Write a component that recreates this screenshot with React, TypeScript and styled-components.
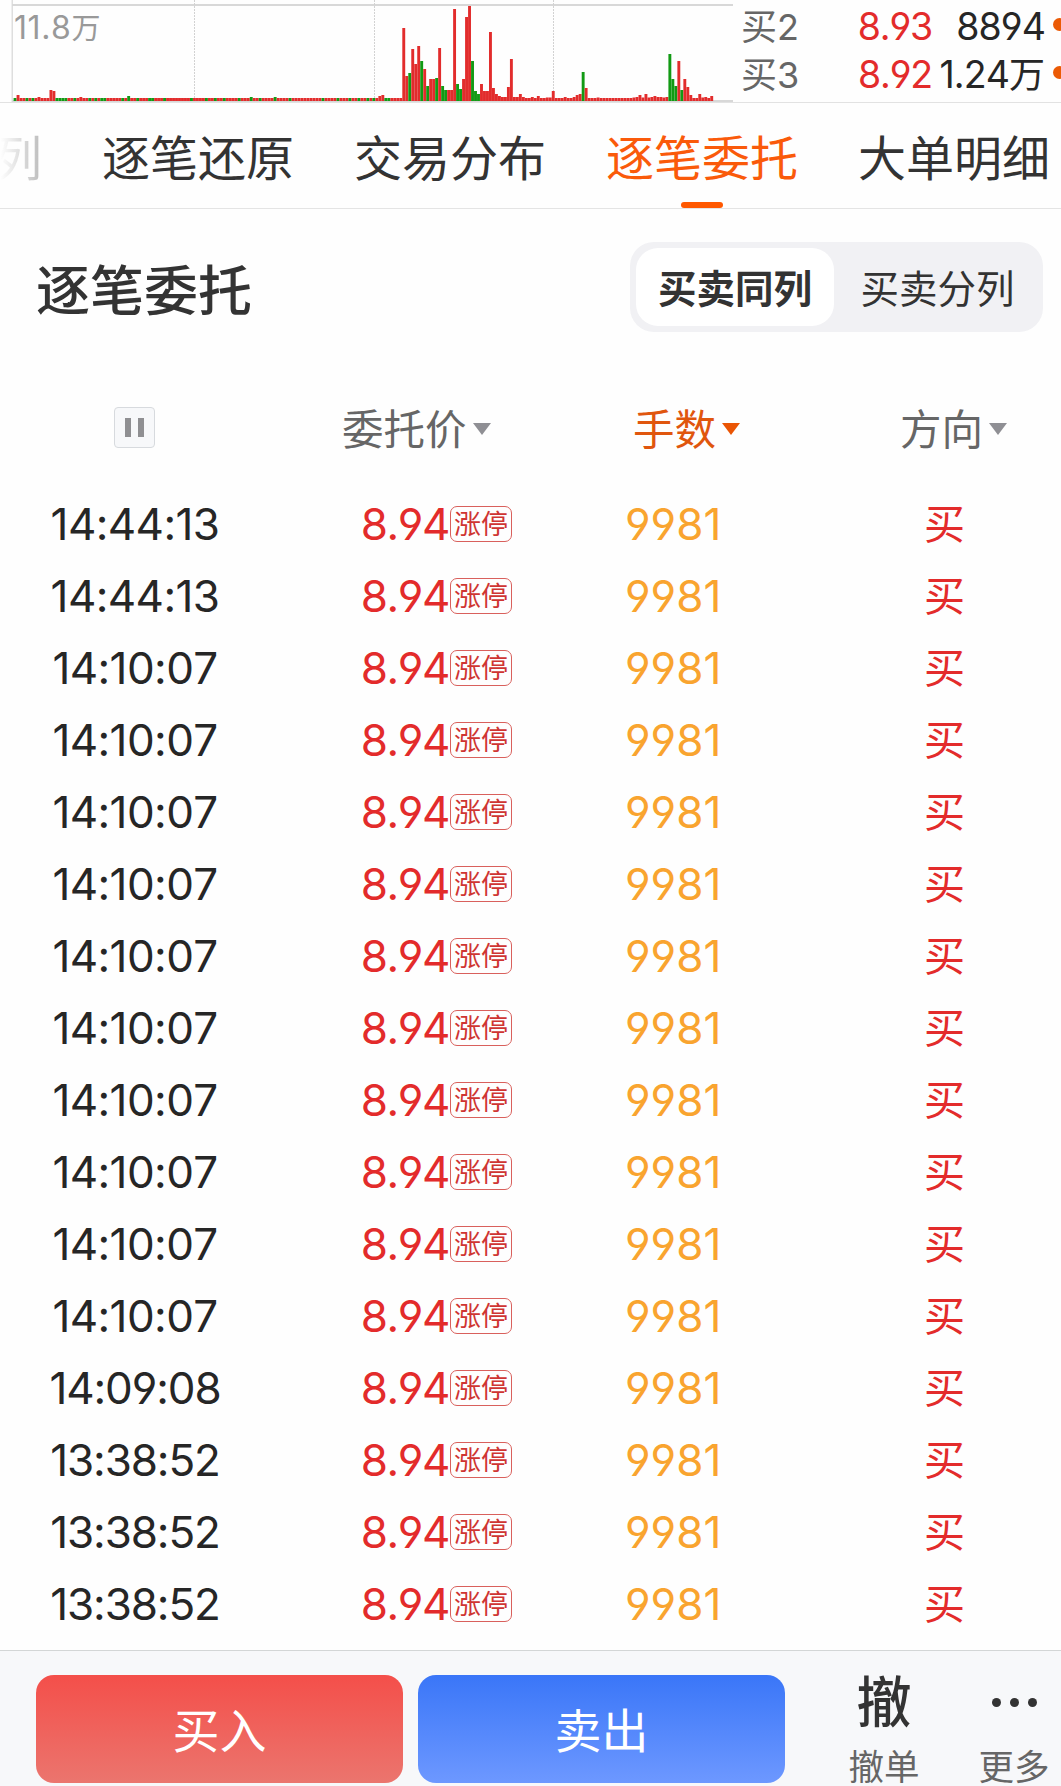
import React from 'react';
import styled, { createGlobalStyle, css } from 'styled-components';

const Global = createGlobalStyle`
  * { box-sizing: border-box; }
  body {
    margin: 0;
    background: #fefefe;
    overflow: hidden;
    font-family: Inter, "Noto Sans CJK SC", sans-serif;
    font-feature-settings: "cv03", "cv04";
    font-kerning: none;
    color: #333;
  }
`;

const Screen = styled.div`
  width: 1061px;
  height: 1786px;
  display: flex;
  flex-direction: column;
  overflow: hidden;
`;

/* ---------- quote strip ---------- */
const Quote = styled.section`
  height: 103px;
  flex: none;
  display: flex;
  border-bottom: 1px solid #e2e2e2;
`;
const ChartBox = styled.div`
  position: relative;
  width: 733px;
  height: 102px;
`;
const Peak = styled.span`
  position: absolute;
  left: 14px;
  top: 8px;
  font-size: 32px;
  line-height: 40px;
  letter-spacing: 0.6px;
  color: #999;
  white-space: nowrap;
`;
const PeakUnit = styled.span`
  font-size: 29px;
  letter-spacing: 0;
`;
const Book = styled.div`
  flex: 1;
  padding: 3px 0 0 8px;
`;
const Level = styled.div`
  display: grid;
  grid-template-columns: 80px 111px 1fr 16px;
  height: 48px;
  line-height: 48px;
  align-items: center;
  font-size: 37.5px;
  white-space: nowrap;
`;
const LevelName = styled.span`
  color: #666;
  font-size: 36px;
`;
const LevelPrice = styled.span`
  color: #e32b2b;
  text-align: right;
  letter-spacing: -1.2px;
`;
const LevelSize = styled.span`
  color: #262626;
  text-align: right;
  letter-spacing: -0.9px;
  small { font-size: 36px; letter-spacing: 0; }
`;
const Dot = styled.i`
  width: 13px;
  height: 13px;
  margin: -5px 0 0 8px;
  border-radius: 50%;
  background: #eb5a05;
`;

/* ---------- tabs ---------- */
const Tabs = styled.nav`
  height: 106px;
  flex: none;
  display: flex;
  gap: 60px;
  border-bottom: 1px solid #e4e4e4;
`;
const Tab = styled.div<{ $active?: boolean; $faded?: boolean }>`
  flex: none;
  width: ${(p) => (p.$faded ? 42 : 192)}px;
  display: flex;
  flex-direction: column;
  align-items: ${(p) => (p.$faded ? 'flex-end' : 'center')};
  justify-content: space-between;
  padding-top: 21px;
  font-size: 48px;
  line-height: 70px;
  white-space: nowrap;
  color: ${(p) => (p.$active ? '#fa5a0a' : '#333')};
  ${(p) =>
    p.$faded &&
    css`
      color: transparent;
      background: linear-gradient(90deg, #fff, #bbb);
      background-clip: text;
      -webkit-background-clip: text;
    `}
`;
const Underline = styled.span`
  width: 42px;
  height: 6px;
  border-radius: 3px;
  background: #ff5800;
`;

/* ---------- heading ---------- */
const Heading = styled.header`
  height: 157px;
  flex: none;
  display: flex;
  justify-content: space-between;
  align-items: flex-start;
  padding: 33px 18px 0 36px;
`;
const Title = styled.h1`
  margin: 0;
  padding-top: 9px;
  font-size: 54px;
  line-height: 82px;
  font-weight: 500;
`;
const Segments = styled.div`
  display: flex;
  width: 413px;
  height: 90px;
  padding: 6px;
  border-radius: 24px;
  background: #f1f1f4;
`;
const Segment = styled.div<{ $on?: boolean }>`
  width: ${(p) => (p.$on ? 198 : 207)}px;
  flex: none;
  border-radius: 22px;
  background: ${(p) => (p.$on ? '#fff' : 'transparent')};
  font-weight: ${(p) => (p.$on ? 600 : 400)};
  font-size: 38.5px;
  line-height: 83px;
  text-align: center;
`;

/* ---------- table ---------- */
const Table = styled.section`
  flex: 1;
  display: flex;
  flex-direction: column;
`;
const columns = css`
  display: grid;
  grid-template-columns: 342px 284px 274px 161px;
  align-items: center;
`;
const HeadRow = styled.div`
  ${columns}
  height: 122px;
  padding-top: 1px;
`;
const PauseButton = styled.div`
  display: flex;
  gap: 7px;
  align-items: center;
  justify-content: center;
  width: 41px;
  height: 41px;
  margin-left: 114px;
  border: 1px solid #d7dade;
  border-radius: 4px;
  background: #f7f8fa;
  i { width: 6px; height: 19px; background: #8f8f92; }
`;
const HeadCell = styled.div<{ $active?: boolean; $indent?: number }>`
  display: flex;
  align-items: center;
  gap: 6px;
  padding-left: ${(p) => p.$indent ?? 0}px;
  font-size: 41.5px;
  line-height: 60px;
  color: ${(p) => (p.$active ? '#e0560e' : '#666')};
`;
const HeadLabel = styled.span`
  padding-top: 5px;
`;
const Caret = styled.i<{ $active?: boolean }>`
  margin-top: 2px;
  border: 9px solid transparent;
  border-top: 12px solid ${(p) => (p.$active ? '#ea5504' : '#8f8f94')};
  border-bottom: 0;
`;
const Row = styled.div`
  ${columns}
  height: 72px;
  font-size: 44px;
  line-height: 72px;
  white-space: nowrap;
`;
const Time = styled.span<{ $loose: boolean }>`
  width: 270px;
  text-align: center;
  color: #262626;
  letter-spacing: ${(p) => (p.$loose ? -0.6 : -1.1)}px;
`;
const Price = styled.span`
  display: flex;
  align-items: center;
  justify-content: flex-end;
  padding-right: 114px;
  color: #e32b2b;
  letter-spacing: -1.4px;
`;
const LimitTag = styled.span`
  flex: none;
  width: 62px;
  height: 36px;
  margin-left: 1px;
  border: 1px solid #d9605c;
  border-radius: 7px;
  font-size: 27px;
  line-height: 35px;
  letter-spacing: 0;
  text-align: center;
  color: #cf3532;
`;
const Lots = styled.span`
  margin-left: -1px;
  color: #f9a42f;
  letter-spacing: 0;
`;
const Side = styled.span`
  padding-left: 24px;
  font-size: 41px;
  color: #e32b2b;
`;

/* ---------- bottom bar ---------- */
const Bar = styled.footer`
  height: 136px;
  flex: none;
  display: flex;
  padding: 24px 0 0 36px;
  border-top: 1px solid #d3d6d6;
  background: #f7f8fa;
`;
const Trade = styled.div<{ $from: string; $to: string }>`
  width: 367px;
  height: 108px;
  margin-right: 15px;
  border-radius: 18px;
  background: linear-gradient(180deg, ${(p) => p.$from}, ${(p) => p.$to});
  color: #fff;
  font-size: 47px;
  line-height: 112px;
  text-align: center;
`;
const Action = styled.div<{ $width: number }>`
  width: ${(p) => p.$width}px;
  flex: none;
  display: flex;
  flex-direction: column;
  align-items: center;
`;
const ActionGlyph = styled.span`
  height: 54px;
  flex: none;
  display: flex;
  align-items: center;
  gap: 9px;
  font-size: 55px;
  font-weight: 500;
  line-height: 58px;
  i { width: 9px; height: 9px; border-radius: 50%; background: #333; }
`;
const ActionLabel = styled.span`
  flex: none;
  margin-top: 21px;
  font-size: 35.5px;
  line-height: 36px;
  color: #666;
`;

/* Volume per minute: tall entries by index, everything else is the 3px floor. */
const FIRST = 130;
const heights: Record<number, number> = {
  1: 6, 8: 4, 12: 11, 13: 10, 22: 4, 38: 5, 79: 4, 87: 4, 122: 5, 123: 6,
};
[
  73, 25, 28, 52, 37, 55, 40, 32, 15, 22, 22, 23, 53, 15, 11, 11, 11, 92, 17, 12, 22, 84, 95, 40, 10, 7,
  17, 10, 10, 69, 13, 7, 5, 4, 4, 14, 42, 4, 4, 7, 4, 3, 3, 4, 3, 5, 3, 3, 3.5, 3.5, 10, 3, 3, 3, 4, 3, 3,
  4, 6, 7, 29, 13, 3, 3, 3, 3.5, 3, 3, 3, 3, 3, 3, 3, 3, 3, 3, 3, 3.5, 4, 6, 3.5, 7, 3.5, 4, 5, 4, 4, 3.5,
  4, 47, 22, 15, 40, 11, 22, 14, 6, 3, 3, 7, 3.5, 4, 3, 5,
].forEach((h, k) => {
  heights[FIRST + k] = h;
});
const falling = new Set([
  0, 4, 6, 14, 15, 16, 17, 20, 25, 27, 29, 30, 36, 38, 41, 45, 46, 50, 59, 64, 67, 70, 75, 79, 82, 87, 92,
  103, 108, 112, 115, 118, 120, 124, 125, 132, 136, 138, 141, 143, 144, 148, 149, 153, 154, 155, 190, 219,
  220, 221, 223,
]);

const VolumeChart = () => (
  <svg width="733" height="102" viewBox="0 0 733 102">
    <rect x="11.5" y="0" width="1.5" height="102" fill="#dedede" />
    <rect x="12" y="4" width="721" height="2" fill="#d8d8d8" />
    <rect x="12" y="100" width="721" height="2" fill="#d8d8d8" />
    {[194.5, 374.5, 553.5].map((x) => (
      <line key={x} x1={x} x2={x} y1="0" y2="101" stroke="#d2d2d2" strokeDasharray="2 1" />
    ))}
    {Array.from({ length: 234 }, (_, i) => {
      const h = heights[i] ?? 3;
      return (
        <rect
          key={i}
          x={13.6 + 2.99 * i}
          y={101 - h}
          width="2.9"
          height={h}
          fill={falling.has(i) ? '#129a14' : '#e22c2c'}
        />
      );
    })}
  </svg>
);

const times = [
  '14:44:13', '14:44:13',
  ...Array<string>(10).fill('14:10:07'),
  '14:09:08', '13:38:52', '13:38:52', '13:38:52',
];

export default function App() {
  return (
    <Screen>
      <Global />
      <Quote>
        <ChartBox>
          <VolumeChart />
          <Peak>11.8<PeakUnit>万</PeakUnit></Peak>
        </ChartBox>
        <Book>
          <Level>
            <LevelName>买2</LevelName>
            <LevelPrice>8.93</LevelPrice>
            <LevelSize>8894</LevelSize>
            <Dot />
          </Level>
          <Level>
            <LevelName>买3</LevelName>
            <LevelPrice>8.92</LevelPrice>
            <LevelSize>1.24<small>万</small></LevelSize>
            <Dot />
          </Level>
        </Book>
      </Quote>

      <Tabs>
        <Tab $faded>列</Tab>
        <Tab>逐笔还原</Tab>
        <Tab>交易分布</Tab>
        <Tab $active>逐笔委托<Underline /></Tab>
        <Tab>大单明细</Tab>
      </Tabs>

      <Heading>
        <Title>逐笔委托</Title>
        <Segments>
          <Segment $on>买卖同列</Segment>
          <Segment>买卖分列</Segment>
        </Segments>
      </Heading>

      <Table>
        <HeadRow>
          <PauseButton><i /><i /></PauseButton>
          <HeadCell><HeadLabel>委托价</HeadLabel><Caret /></HeadCell>
          <HeadCell $active $indent={7}><HeadLabel>手数</HeadLabel><Caret $active /></HeadCell>
          <HeadCell><HeadLabel>方向</HeadLabel><Caret /></HeadCell>
        </HeadRow>
        {times.map((t, i) => (
          <Row key={i}>
            <Time $loose={t.split('1').length > 2}>{t}</Time>
            <Price>8.94<LimitTag>涨停</LimitTag></Price>
            <Lots>9981</Lots>
            <Side>买</Side>
          </Row>
        ))}
      </Table>

      <Bar>
        <Trade $from="#f44f4a" $to="#eb756e">买入</Trade>
        <Trade $from="#3a76f8" $to="#6d98ff">卖出</Trade>
        <Action $width={168}>
          <ActionGlyph>撤</ActionGlyph>
          <ActionLabel>撤单</ActionLabel>
        </Action>
        <Action $width={92}>
          <ActionGlyph><i /><i /><i /></ActionGlyph>
          <ActionLabel>更多</ActionLabel>
        </Action>
      </Bar>
    </Screen>
  );
}
